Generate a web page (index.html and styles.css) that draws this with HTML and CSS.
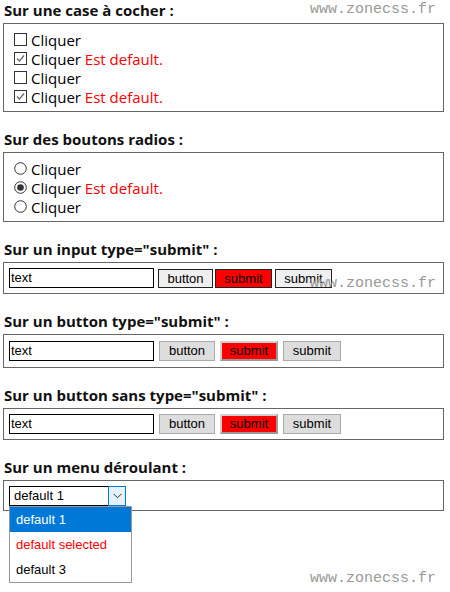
FILE: index.html
```html
<!DOCTYPE html>
<html lang="fr">
<head>
<meta charset="utf-8">
<title>zonecss</title>
<link rel="stylesheet" href="styles.css">
</head>
<body>
<div class="page">
  <h3 class="title first">Sur une case à cocher :</h3>
  <div class="box list-box">
    <div class="row"><svg class="chk" width="13" height="13" viewBox="0 0 13 13"><rect x="0.5" y="0.5" width="12" height="12" fill="#fff" stroke="#333"/></svg>Cliquer</div>
    <div class="row"><svg class="chk" width="13" height="13" viewBox="0 0 13 13"><rect x="0.5" y="0.5" width="12" height="12" fill="#fff" stroke="#333"/><path d="M3 6.5 L5.5 9 L10 3.5" fill="none" stroke="#666" stroke-width="1.2"/></svg>Cliquer <span class="red">Est default.</span></div>
    <div class="row"><svg class="chk" width="13" height="13" viewBox="0 0 13 13"><rect x="0.5" y="0.5" width="12" height="12" fill="#fff" stroke="#333"/></svg>Cliquer</div>
    <div class="row"><svg class="chk" width="13" height="13" viewBox="0 0 13 13"><rect x="0.5" y="0.5" width="12" height="12" fill="#fff" stroke="#333"/><path d="M3 6.5 L5.5 9 L10 3.5" fill="none" stroke="#666" stroke-width="1.2"/></svg>Cliquer <span class="red">Est default.</span></div>
  </div>

  <h3 class="title">Sur des boutons radios :</h3>
  <div class="box list-box">
    <div class="row"><svg class="rad" width="13" height="13" viewBox="0 0 13 13"><circle cx="6.5" cy="6.5" r="5.8" fill="#fff" stroke="#333"/></svg>Cliquer</div>
    <div class="row"><svg class="rad" width="13" height="13" viewBox="0 0 13 13"><circle cx="6.5" cy="6.5" r="5.8" fill="#fff" stroke="#333"/><circle cx="6.5" cy="6.5" r="3.3" fill="#333"/></svg>Cliquer <span class="red">Est default.</span></div>
    <div class="row"><svg class="rad" width="13" height="13" viewBox="0 0 13 13"><circle cx="6.5" cy="6.5" r="5.8" fill="#fff" stroke="#333"/></svg>Cliquer</div>
  </div>

  <h3 class="title">Sur un input type="submit" :</h3>
  <div class="box form-box form-a">
    <span class="field">text</span>
    <span class="btn-a btn-first">button</span>
    <span class="btn-a btn-red">submit</span>
    <span class="btn-a btn-last">submit</span>
  </div>

  <h3 class="title">Sur un button type="submit" :</h3>
  <div class="box form-box form-b">
    <span class="field">text</span>
    <span class="btn-b">button</span>
    <span class="btn-b btn-red-b">submit</span>
    <span class="btn-b">submit</span>
  </div>

  <h3 class="title">Sur un button sans type="submit" :</h3>
  <div class="box form-box form-b form-b2">
    <span class="field">text</span>
    <span class="btn-b">button</span>
    <span class="btn-b btn-red-b">submit</span>
    <span class="btn-b">submit</span>
  </div>

  <h3 class="title">Sur un menu déroulant :</h3>
  <div class="box form-box form-c">
    <div class="select">
      <span class="select-text">default 1</span>
      <span class="select-arrow"><svg width="9" height="6" viewBox="0 0 9 6"><path d="M0.5 0.8 L4.5 4.8 L8.5 0.8" fill="none" stroke="#333" stroke-width="1"/></svg></span>
      <div class="dropdown">
        <div class="opt opt-active">default 1</div>
        <div class="opt opt-red">default selected</div>
        <div class="opt">default 3</div>
      </div>
    </div>
  </div>
</div>
<span class="mark mark-1">www.zonecss.fr</span>
<span class="mark mark-2">www.zonecss.fr</span>
<span class="mark mark-3">www.zonecss.fr</span>
</body>
</html>
```
FILE: styles.css
```css
html, body {
  margin: 0;
  padding: 0;
  background: #fff;
}
body {
  position: relative;
  width: 450px;
  height: 592px;
  overflow: hidden;
  font-family: "Open Sans", "DejaVu Sans", sans-serif;
  color: #000;
}
.page {
  padding: 0 7px 0 3px;
}
.title {
  margin: 17px 0 3px 1px;
  height: 20px;
  font-size: 15px;
  line-height: 20px;
  font-weight: bold;
  color: #111;
}
.title.first {
  margin-top: 0;
}
.box {
  border: 1px solid #666;
  box-sizing: border-box;
  width: 441px;
}
.list-box {
  padding: 6px 9px 5px 9px;
}
.row {
  display: flex;
  align-items: center;
  height: 19px;
  font-size: 15px;
  white-space: pre;
}
.chk, .rad {
  display: block;
  margin-right: 4px;
  margin-left: 1px;
  flex: none;
}
.red {
  color: #ff0000;
}
.form-box {
  display: flex;
  align-items: center;
  font-family: "Liberation Sans", Arial, sans-serif;
  font-size: 13px;
}
.form-a {
  height: 32px;
  padding: 0 5px;
  gap: 2px;
}
.form-a .btn-first {
  margin-left: 2px;
}
.form-a .btn-last {
  margin-left: 1px;
}
.form-b {
  height: 34px;
  padding: 0 5px;
  gap: 5px;
}
.form-b2 {
  height: 32px;
}
.form-c {
  height: 31px;
  padding: 0 5px;
}
.field {
  box-sizing: border-box;
  width: 145px;
  height: 20px;
  line-height: 18px;
  border: 1px solid #000;
  padding-left: 1px;
}
.btn-a {
  box-sizing: border-box;
  height: 19px;
  line-height: 17px;
  padding: 0 8px;
  border: 1px solid #222;
  background: #efefef;
  width: 55px;
  text-align: center;
}
.btn-red {
  background: #ff0000;
  width: 57px;
}
.btn-a.btn-last {
  width: 57px;
}
.btn-b {
  box-sizing: border-box;
  height: 20px;
  line-height: 18px;
  width: 56px;
  text-align: center;
  border: 1px solid #aaa;
  background: #dddddd;
}
.btn-red-b {
  width: 58px;
  background: #ff0000;
  border: 2px solid;
  border-color: #d0d0d0 #999 #999 #d0d0d0;
  line-height: 16px;
}
.form-b .btn-b:last-child {
  width: 58px;
}
.select {
  position: relative;
  display: flex;
  width: 117px;
  height: 20px;
  box-sizing: border-box;
}
.select-text {
  flex: 1;
  border: 1px solid #000;
  border-right: none;
  line-height: 18px;
  padding-left: 4px;
}
.select-arrow {
  width: 18px;
  box-sizing: border-box;
  border: 1px solid #0078d7;
  background: #e5f1fb;
  display: flex;
  align-items: center;
  justify-content: center;
}
.dropdown {
  position: absolute;
  left: 0;
  top: 20px;
  width: 123px;
  box-sizing: border-box;
  border: 1px solid #999;
  background: #fff;
}
.opt {
  height: 25px;
  line-height: 25px;
  padding-left: 6px;
}
.opt-active {
  background: #0078d7;
  color: #fff;
}
.opt-red {
  color: #ff0000;
}
.mark {
  position: absolute;
  font-family: "Liberation Mono", "DejaVu Sans Mono", monospace;
  font-size: 15px;
  color: #999;
  line-height: 18px;
  white-space: pre;
}
.mark-1 {
  left: 310px;
  top: 1px;
}
.mark-2 {
  left: 310px;
  top: 275px;
}
.mark-3 {
  left: 310px;
  top: 570px;
}
```
